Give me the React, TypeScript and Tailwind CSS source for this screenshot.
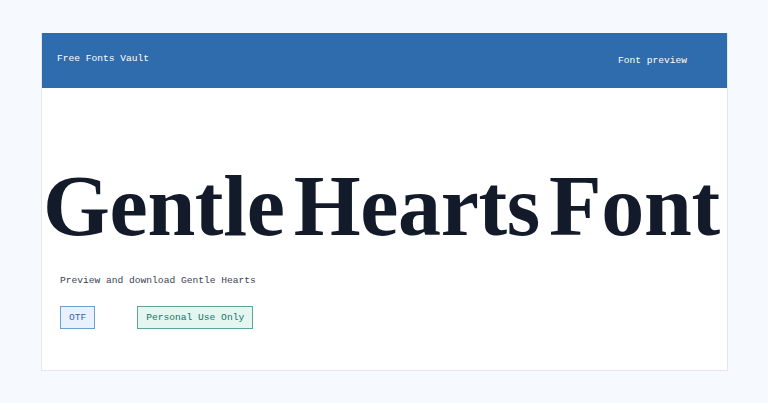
import React from "react";

const mono = { fontFamily: '"Liberation Mono", "DejaVu Sans Mono", monospace' };

function Badge({ children, className }: { children: React.ReactNode; className: string }) {
  return (
    <span className={`inline-flex h-[23px] items-center border px-[8px] text-[9.6px] ${className}`}>{children}</span>
  );
}

export default function App() {
  return (
    <div className="min-h-[403px] w-full bg-[#f6f9fd] pt-[33px]" style={mono}>
      <div className="ml-[41px] w-[687px] border border-t-0 border-[#e3e8ef] bg-white">
        <header className="flex h-[55px] items-start justify-between bg-[#2f6cad] pl-[15px] pr-[40px] text-[9.6px] text-white">
          <span className="mt-[19px]">Free Fonts Vault</span>
          <span className="mt-[21px]">Font preview</span>
        </header>
        <main className="pb-[41px] pl-[1px]">
          <h1
            className="mt-[78px] whitespace-nowrap text-[86px] font-bold leading-[80px] tracking-[-0.004em] text-[#131b2a] [word-spacing:-12px]"
            style={{ fontFamily: '"Liberation Serif", "DejaVu Serif", serif' }}
          >
            Gentle Hearts Font
          </h1>
          <p className="mt-[28px] pl-[17px] text-[9.6px] text-[#3a4252]">Preview and download Gentle Hearts</p>
          <div className="mt-[18px] flex gap-[42px] pl-[17px]">
            <Badge className="border-[#6f9ed3] bg-[#e8f1fc] text-[#2d67a8]">OTF</Badge>
            <Badge className="border-[#5ba697] bg-[#e5f6f1] text-[#127565]">Personal Use Only</Badge>
          </div>
        </main>
      </div>
    </div>
  );
}
